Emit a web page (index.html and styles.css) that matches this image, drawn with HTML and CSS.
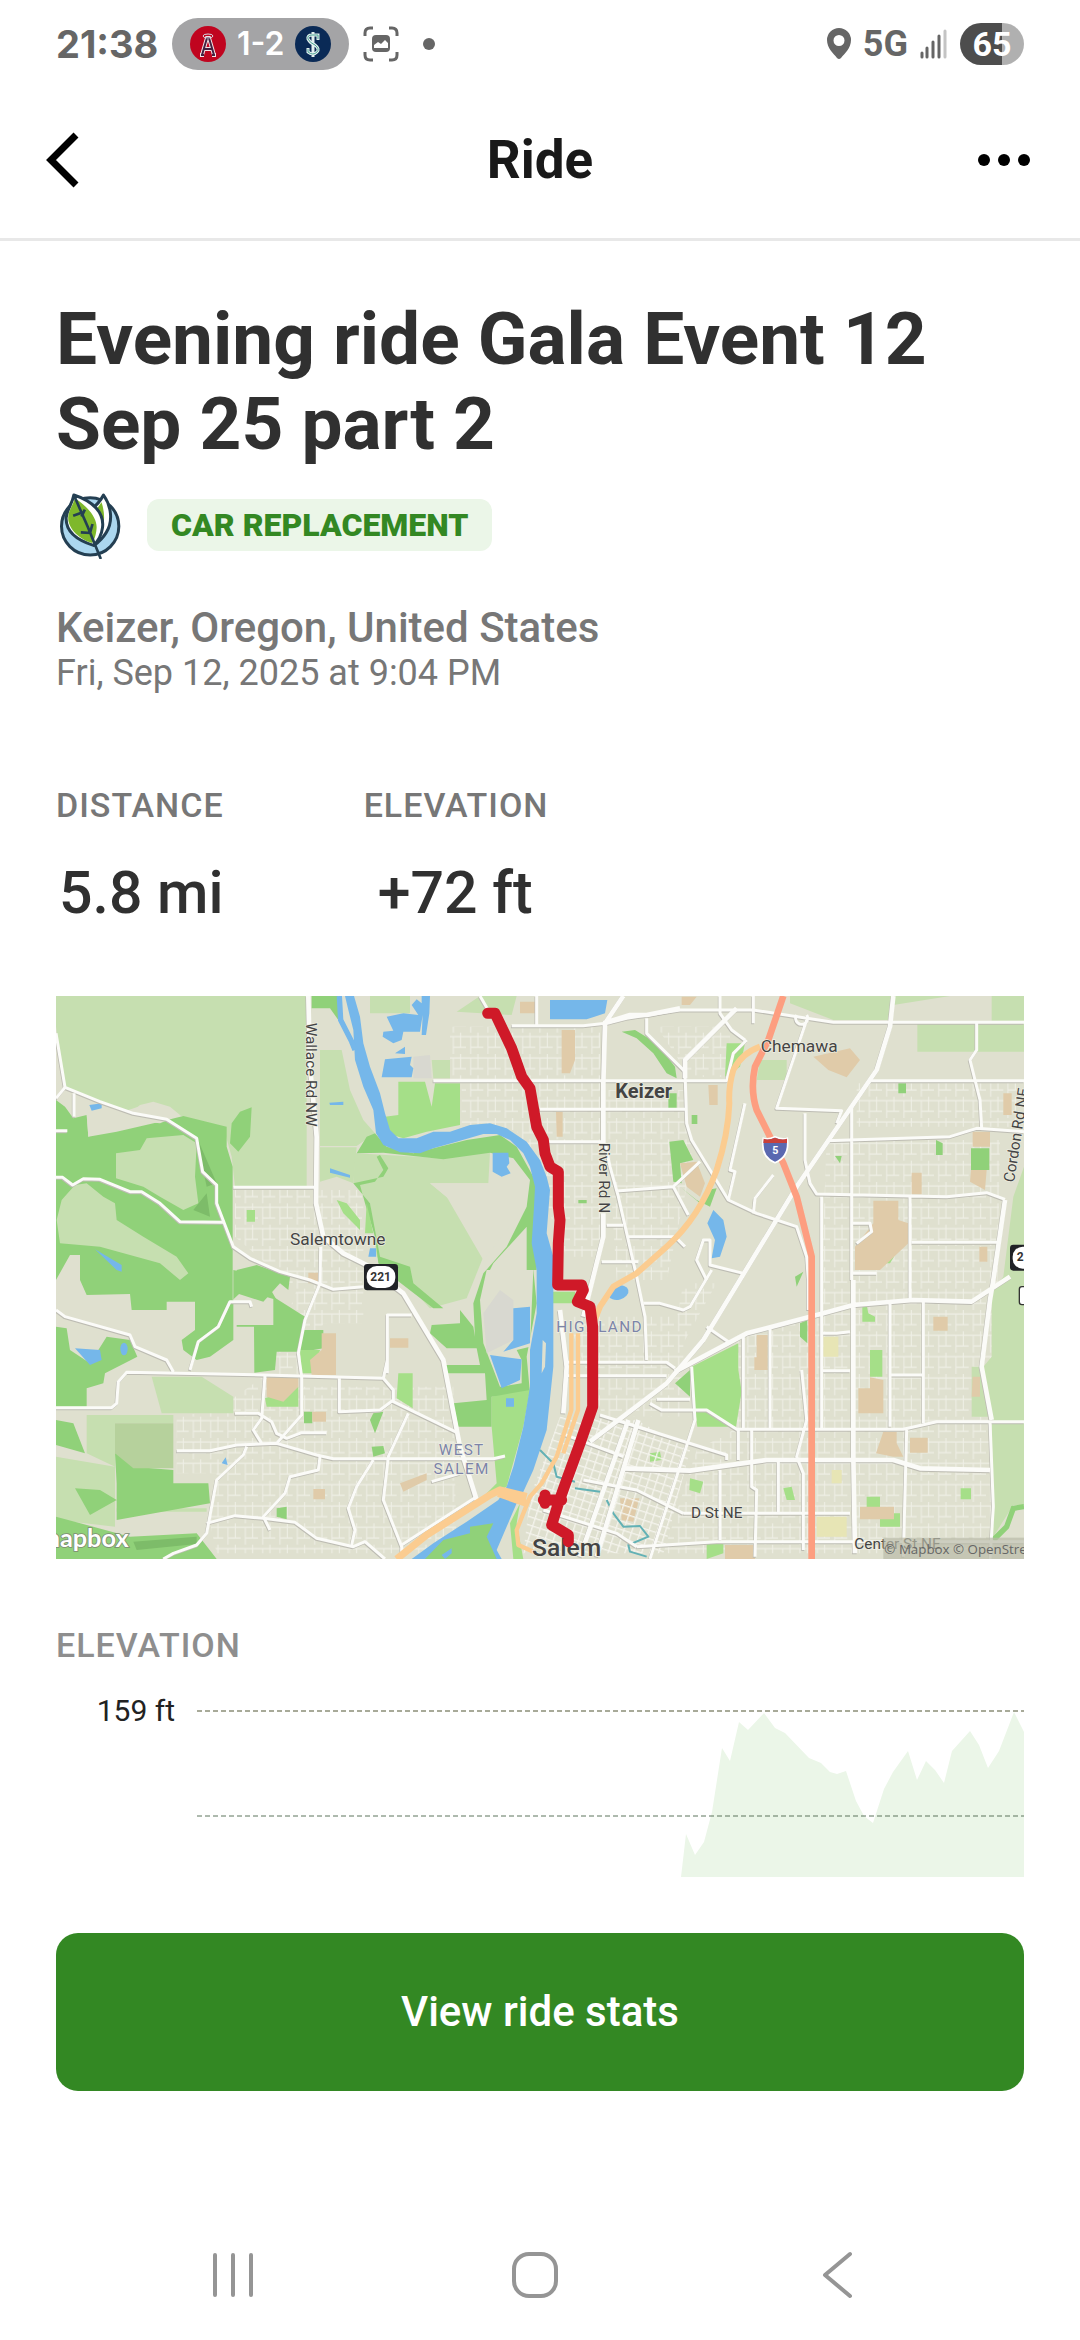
FILE: index.html
```html
<!DOCTYPE html>
<html lang="en">
<head>
<meta charset="utf-8">
<meta name="viewport" content="width=device-width, initial-scale=1">
<title>Ride</title>
<link rel="stylesheet" href="styles.css">
</head>
<body>
<div class="status">
  <div class="status-side">
    <span class="clock">21:38</span>
    <div class="score">
      <svg width="36" height="36" viewBox="0 0 36 36" aria-hidden="true"><circle cx="18" cy="18" r="18" fill="#c0041f"/><path d="M12 29L17 12H19L24 29M14 23H22M10 29H14M22 29H26" fill="none" stroke="#f2e4e6" stroke-width="4"/><path d="M12 29L17 12H19L24 29M14 23H22M11 29H14M22 29H25" fill="none" stroke="#432242" stroke-width="2"/><ellipse cx="18" cy="10" rx="5" ry="2" fill="none" stroke="#d5dbe4" stroke-width="1"/></svg>
      <span>1-2</span>
      <svg width="36" height="36" viewBox="0 0 36 36" aria-hidden="true"><circle cx="18" cy="18" r="18" fill="#0a2a56"/><path d="M23 14V9H17Q12 9 13 13Q15 17 20 19Q25 23 22 26Q18 30 13 26V22M18 6V31" fill="none" stroke="#e4f0f0" stroke-width="3"/><path d="M23 13V9H17Q12 9 13 13Q15 17 20 19Q25 23 22 26Q18 30 13 26V23" fill="none" stroke="#4ba394" stroke-width="1"/></svg>
    </div>
    <svg width="36" height="36" viewBox="0 0 36 36" aria-hidden="true"><path d="M2 10V7Q2 2 7 2H10M26 2H29Q34 2 34 7V10M34 26V29Q34 34 29 34H26M10 34H7Q2 34 2 29V26" fill="none" stroke="#666" stroke-width="3"/><rect x="9" y="9" width="18" height="17" rx="4" fill="#666"/><path d="M11 22V19L15 16L18 18L22 14L25 17V22Z" fill="#fff"/></svg>
    <svg class="dot" width="12" height="12" aria-hidden="true"><circle cx="6" cy="6" r="6" fill="#666"/></svg>
  </div>
  <div class="status-side status-right">
    <svg width="24" height="32" viewBox="0 0 24 32" aria-hidden="true"><path fill="#666" fill-rule="evenodd" d="M12 0A12 12 0 0 0 0 12C0 20 6 25 10 30Q12 32 14 30C18 25 24 20 24 12A12 12 0 0 0 12 0ZM12 7a5 5 0 1 1 0 11a5 5 0 1 1 0-11Z"/></svg>
    <span class="network">5G</span>
    <svg class="signal" width="28" height="30" viewBox="0 0 28 30" aria-hidden="true"><path d="M2 28V24M7 28V19M13 28V13M19 28V7" stroke="#666" stroke-width="3" stroke-linecap="round"/><path d="M25 28V2" stroke="#c4c4c4" stroke-width="3" stroke-linecap="round"/></svg>
    <span class="battery">65</span>
  </div>
</div>

<header class="bar">
  <button class="icon-button" aria-label="Back"><svg width="34" height="56" viewBox="3 0 34 56"><path d="M33 3L8 28L33 53" fill="none" stroke="#000" stroke-width="7" transform="translate(-2 0)"/></svg></button>
  <h1 class="bar-title">Ride</h1>
  <button class="icon-button" aria-label="More options"><svg width="54" height="12" viewBox="1 0 54 12"><circle cx="7" cy="6" r="6"/><circle cx="27" cy="6" r="6"/><circle cx="47" cy="6" r="6"/></svg></button>
</header>

<main class="ride">
  <h2 class="title">Evening ride Gala Event 12 Sep 25 part 2</h2>
  <div class="tags">
    <svg width="67" height="68" viewBox="0 0 200 204" aria-hidden="true">
      <g stroke="#243f52" stroke-width="9" stroke-linejoin="round">
        <circle cx="102" cy="106" r="86" fill="#abd7ef"/>
        <path d="M142 12C165 45 172 90 150 125C138 145 125 155 114 163L95 60Q125 45 142 12Z" fill="#fff"/>
        <path d="M136 34C150 75 145 115 122 145L115 60Q128 48 136 34Z" fill="#7eb82b" stroke="none"/>
        <path d="M53 12C110 30 145 65 139 110C136 135 126 150 112 163C70 150 28 125 30 80C32 55 48 40 53 12Z" fill="#fff"/>
        <path d="M56 22C100 50 125 85 121 115C119 135 114 147 108 156C72 145 36 115 36 80C38 55 50 45 56 22Z" fill="#7eb82b" stroke="none"/>
        <path d="M53 12L95 108L134 204M76 65L51 74M76 77L86 56M104 126L74 124M101 128L109 99" fill="none" stroke-width="8"/>
      </g>
    </svg>
    <span class="badge">CAR REPLACEMENT</span>
  </div>
  <p class="place">Keizer, Oregon, United States</p>
  <p class="date">Fri, Sep 12, 2025 at 9:04 PM</p>

  <dl class="stats">
    <div class="stat"><dt class="label">DISTANCE</dt><dd>5.8 mi</dd></div>
    <div class="stat stat-elevation"><dt class="label">ELEVATION</dt><dd>+72 ft</dd></div>
  </dl>

  <svg class="map" viewBox="18 18 2904 1689" role="img" aria-label="Map of the route from Keizer to Salem">
    <defs>
      <pattern id="streets" width="52" height="64" patternUnits="userSpaceOnUse"><path d="M0 12H52M14 12V64M36 0V44M14 44H52" fill="none" stroke="#efefe6" stroke-width="3"/></pattern>
      <pattern id="blocks" width="24" height="24" patternUnits="userSpaceOnUse" patternTransform="rotate(18)"><path d="M0 2H24M2 0V24" fill="none" stroke="#f4f3ec" stroke-width="4"/></pattern>
      <g id="roads">
        <g stroke-width="9">
          <path d="M18 130L45 292L150 335L250 370L350 388L440 445L458 545L500 585L500 640L550 770L600 805L690 845L780 870L850 898L940 890"/>
          <path d="M18 325L45 292M72 310V380M18 422H52M18 562L38 562L68 585L100 566L150 568L240 605L275 605L330 640L390 695L525 697M550 592H795"/>
          <path d="M812 770L810 880L765 990L745 1090L755 1160V1275L680 1360L560 1365L480 1382H380M680 1360L800 1395L850 1406H1330L1365 1398"/>
          <path d="M18 1253H185L200 1240L205 1175L230 1147L640 1155L1000 1165L1030 1200V1235L1220 1327M18 960L45 980L240 1035L255 1070L350 1110L370 1145"/>
          <path d="M420 1140L445 1055L505 1010L540 935H600L605 950M645 1155L635 1285L610 1320L635 1360M555 1270H625L665 1295L680 1330L710 1345L755 1328H830"/>
          <path d="M590 1370L580 1395L500 1470L470 1630L440 1665L370 1690L340 1707M470 1600L555 1577L640 1585L735 1597L800 1645L910 1670L945 1655L1005 1707"/>
          <path d="M810 1400L805 1440L720 1460L705 1510L640 1580L660 1620M970 1410L920 1490L895 1555L915 1620L905 1665M1075 1270L1015 1400L1000 1530L1055 1670M1012 1150V975H1085M1000 1165L1012 1110M868 1165V1265L990 1260L1030 1230M1055 1690V1665L1275 1523M1145 1475L1230 1450"/>
          <path d="M1150 272H2030L2050 190L2090 150M1385 107H1600L1680 98L1730 85L1890 60L2110 60L2350 97L2922 97M1460 18V105M1290 18L1320 70"/>
          <path d="M1470 358H1910M1470 455H1665M1700 603L1870 590L1950 515M1870 590L1915 675M1670 706H1720M1655 815H1765M1735 740H1875L1905 770"/>
          <path d="M1665 460L1680 530L1705 620L1760 860L1785 980L1790 1110M1790 85V130L1905 245L1910 400L1925 450L2035 630L2120 670L2240 710L2270 800L2275 870V960"/>
          <path d="M2270 75A18 18 0 1 1 2240 75M2270 90L2180 355L2375 362L2360 400M2265 370V510L2280 580L2300 612L2580 618L2690 620L2810 608L2865 628M2330 452L2700 440L2780 415L2922 425M2780 97V180L2760 210L2790 330L2795 415M2405 345V870M2460 272H2922M2315 620V1320M2580 620V930M2585 757H2845M2405 700H2460L2465 725L2420 760M2405 850H2480"/>
          <path d="M2085 340L2040 540L2055 545L2035 630M2170 555L2115 625L2110 670M2010 18L2010 70L2045 120L2085 150M2110 18V100M1970 870L1940 810L1960 750L1980 750V825L2080 850"/>
          <path d="M2520 935V1310M2620 935V1300M2315 1142H2400M2520 1155H2620M2160 1010V1315M2080 1040V1315M2315 1030L2360 1030L2400 1025M1780 940H1830L1900 960L1920 950L1985 840M1970 1010L2035 1055"/>
          <path d="M1545 1117H1850L1875 1135M1545 1157H1850M1800 1240L1835 1260H1970L2060 1318H2560L2660 1295H2922M1820 1228H1920M1925 1130L1935 1290L1800 1707M1650 1275L2030 1395V1410M2065 1320V1410M2105 1315V1490L2120 1500L2115 1700M2010 1440V1650M2185 1410V1570M2255 1140L2270 1290L2240 1400L2260 1450V1680"/>
          <path d="M1900 1570H2400M1760 1670L2000 1655H2922M2570 1320L2560 1700M2820 1295L2830 1550L2820 1707M1535 1330L1720 1400M1600 1470L1760 1500L1900 1570M1480 1560L1700 1630L1760 1670"/>
        </g>
        <g stroke-width="14">
          <path d="M775 18L780 230L800 440L798 640L820 740L880 790L950 825L1060 910L1180 1110L1230 1370L1280 1530"/>
          <path d="M1720 18L1665 100L1660 280V460M1660 670V740L1630 860L1600 980M1660 100L1740 75L1790 75L1890 55M2060 55L1905 210V265M2530 18L2520 110L2480 240L2240 590L1960 1050L1850 1180L1620 1355"/>
          <path d="M1875 1145L2090 1030L2320 970L2410 945L2590 930L2765 935L2880 860M2410 870V1400L2415 1690M1720 1435L1920 1442L2150 1410H2530L2610 1435L2820 1440M2865 630L2830 870L2820 930L2795 1130L2825 1290"/>
          <path d="M1735 1290L1590 1700M1765 1290L1640 1700M1530 960L1550 1130L1540 1270"/>
        </g>
      </g>
    </defs>

    <rect x="18" y="18" width="2904" height="1689" fill="#dfe0cf"/>

    <!-- street texture in built-up areas -->
    <g fill="url(#streets)">
      <path d="M555 600H940V1000H820L750 1190H1210L1220 1690H500L480 1600L500 1450H380V1280L500 1260L640 1160L700 1010L740 900L555 740Z"/>
      <path d="M1200 110H1650V800H1550L1400 420H1235V270H1200Z"/>
      <path d="M1665 300H1900L1930 500L1850 870H1700ZM1820 110H2040V260H1920ZM2330 450H2850L2830 1690H1840L1940 1380L2050 1320V1040L2310 980Z"/>
      <path d="M2420 280H2900V410H2420ZM1550 980H1900V1280H1660ZM1900 880H2000L1850 1150Z"/>
    </g>

    <!-- open fields -->
    <g fill="#c6dfb0">
      <path d="M18 18H770V590H555L545 500L520 410L400 380L330 350L280 345L220 365L150 340L75 310L45 290L18 110Z"/>
      <path d="M810 180H875L900 300L940 390L975 430L920 468H810ZM810 472H920L910 580L860 560L810 575ZM960 18H1080V70H960ZM1220 65L1290 18H1400L1385 75ZM1145 210H1200V265H1150Z"/>
      <path d="M915 490L1180 505L1320 485L1315 580L1140 580L1200 630L1300 800L1250 925L1140 955L1060 870L980 800L960 640L910 580Z"/>
      <path d="M110 1275H370V1300H195V1430L110 1390ZM305 1160H455L550 1220V1270H335ZM18 1400L195 1430V1610L18 1590ZM200 1555H470V1565H200Z"/>
      <path d="M2220 18H2700L2530 45L2520 90H2350L2220 40ZM2825 18H2922V92H2825ZM2602 100H2922V185H2602ZM2922 530L2890 620L2860 860L2825 900V1100L2800 1130L2825 1290L2830 1640L2890 1545H2922ZM2130 210H2210V270H2120ZM2765 1130H2795L2820 1280H2765Z"/>
    </g>

    <!-- woodland -->
    <g fill="#90d179">
      <path d="M18 330L45 350L70 385L110 375L115 440L200 425L330 395L400 378L530 410L530 470L548 530V930L580 900L680 930L640 860L550 840V1050L480 1100L440 1110L400 1080L395 1050L435 1020V935H350V960H245L240 912L110 915L90 870V795H60L18 870Z"/>
      <path d="M540 460L545 400L570 365L605 352L600 440L565 485ZM785 18H865V90L840 55H785ZM1110 360L1168 368V415L1135 405Z"/>
      <path d="M560 840L620 825L720 860L715 900L690 880L640 935L560 910ZM670 920L765 980L760 1020H820V1075L760 1085H680L675 1140L613 1148L612 1010H560V1005H670Z"/>
      <path d="M18 1010L50 1015L60 1080L120 1120L170 1040L240 1050L262 1100L165 1150L160 1180L110 1195V1250H18ZM195 1390H250V1430L370 1440V1480H475L480 1540L200 1590V1480ZM75 1495L150 1500L200 1530L120 1575ZM18 1580L240 1640L440 1630L500 1707H18ZM18 1290L70 1300L105 1390L18 1365Z"/>
      <path d="M920 490L950 440L975 430L1010 470L1090 490L1250 450L1350 435L1400 470L1450 560L1460 600V840H1450L1460 940L1430 1100L1440 1210L1400 1240L1350 1220H1325V1310H1225L1210 1240L1310 1230L1305 1150H1190L1185 1125H1290L1280 1075H1190L1140 1030L1145 1005L1230 1000L1230 960L1270 1010L1275 1040L1270 940L1300 850L1370 770L1430 650L1440 570L1390 505L1320 488L1180 508L1000 488Z"/>
      <path d="M910 580L1000 560L1015 535L990 495L980 500L1000 540L975 575L930 585L945 640L975 740L985 820L1040 870L1150 955H1180L1090 880L1080 830L990 800L960 640ZM970 1270L1000 1265L975 1330L960 1290ZM965 1370L1000 1368L1005 1390L970 1400ZM680 1555L710 1550V1588L680 1580ZM762 1265H787V1300H762Z"/>
      <path d="M1715 125L1755 120L1820 160L1875 230L1880 265L1850 250L1810 190L1760 145ZM1855 310H1880V355H1855ZM1858 455L1900 450L1930 510L1890 520L1895 580L1870 575ZM1890 590L1950 640L1970 600L2000 595L1980 650L1940 630ZM1875 1180L1920 1140V1220ZM2545 280H2568V310H2545ZM2658 450L2678 460V495H2658ZM2250 1000L2272 990V1060L2250 1040ZM2763 475H2818V540H2763ZM1925 375H1942V402H1925ZM2355 498H2375L2370 520ZM1585 630H1610V640H1585ZM2235 860L2260 845L2240 890Z"/>
    </g>

    <!-- clearings -->
    <g fill="#c6dfb0">
      <path d="M198 490L270 480L290 445L400 435L440 460L435 560L445 640L400 660L330 620L280 590L198 565Z"/>
      <path d="M20 690L35 630L75 585L110 580L160 620L195 640L200 690L280 740L380 800L415 850L390 870L330 820L150 770L30 760Z"/>
    </g>
    <g fill="#dfe0cf">
      <path d="M1190 620L1140 580H1320L1335 500L1390 520L1435 570L1425 650L1300 810ZM1430 710V840L1310 860L1330 820ZM270 345L310 335L360 350L390 375L330 400L220 390L115 440L110 370L150 340L240 370ZM1310 840H1450L1440 1070L1400 1080L1415 1110V1180L1350 1190L1300 1060L1290 930Z"/>
    </g>
    <path fill="#d8d8d0" d="M1300 970L1350 900L1390 930V1050L1310 1090ZM1090 200L1140 195L1145 265H1090Z"/>
    <path fill="#b6d19c" d="M195 1300H370V1435H250L195 1390Z"/>
    <path fill="#7dbc69" d="M250 1655L440 1640V1662L260 1680ZM440 440L500 580L470 590L455 520ZM430 660L470 610L480 680Z"/>

    <!-- parks -->
    <g fill="#a5df88">
      <path d="M1045 275H1125L1145 350L1155 280H1230V405L1130 425L1060 445L1010 430L1005 380L1045 375ZM1325 1220L1440 1200L1420 1310L1370 1490L1290 1530L1340 1480L1325 1310ZM1410 1540L1380 1600L1390 1707H1420L1400 1600Z"/>
      <path d="M2030 160H2085L2070 230L2025 260ZM1925 1130L2065 1060V1140L2075 1205L2058 1310H1942L1930 1220ZM2490 1610H2550V1570H2450V1520H2490ZM2490 770H2550L2520 820H2490ZM2460 1080H2497V1160H2460ZM2437 950L2450 945L2455 970L2475 980V995H2437ZM1970 1655H2020V1690L1970 1707ZM1800 1390L1830 1385L1835 1410L1800 1415ZM1920 1465L1960 1475L1950 1510L1918 1500ZM2200 1495L2225 1490L2235 1530L2210 1530ZM2732 1495H2763V1528H2732ZM1505 905H1575V940H1505Z"/>
      <path d="M1045 1150H1088V1255L1040 1225ZM645 1225L745 1190V1250H650ZM750 1080H810L790 1150H755ZM860 630L890 640L930 690V720L880 670ZM590 660H615V695H590ZM950 640L970 730H945Z"/>
    </g>

    <!-- school grounds -->
    <g fill="#e0cba9">
      <path d="M815 1030H858V1155H785L780 1110L815 1080ZM650 1160H745V1190L700 1235L650 1220ZM787 1265H828V1295H787ZM1020 1045H1075V1073H1020ZM1050 1480L1130 1450V1470L1060 1505ZM790 1497H825V1528H790ZM775 848H805V880H775ZM1410 35H1455V70H1410Z"/>
      <path d="M1535 120H1575V210L1560 250H1535ZM1895 20H1940L1920 45H1895ZM2290 200L2400 175L2430 210L2390 262L2335 240ZM1975 285H2003V345H1978ZM1890 520L1940 515L1965 580L1950 620L1910 590ZM1518 365H1538V440H1520ZM2470 632H2545V690L2575 700V760L2490 840H2415V770L2470 700ZM2768 425H2820V470H2768ZM2763 540H2810L2805 600L2760 575ZM2585 548H2615V613H2585ZM2860 310H2885V375H2860ZM2788 770H2812V815H2788Z"/>
      <path d="M2120 1035H2153V1140H2113V1102H2120ZM2460 1162L2500 1170V1270H2425V1195H2460ZM2580 1343H2633V1388H2580ZM2500 1325H2540V1360L2560 1400H2530L2478 1390ZM2430 1550H2532V1588H2430ZM2650 980H2693V1022H2650ZM1710 1525H1768L1750 1595L1715 1590ZM2025 1665H2115V1707H2025ZM2768 1160H2790V1220H2765Z"/>
    </g>
    <path fill="#e7e5b5" d="M2300 1580H2390V1640H2300ZM2320 1040H2365V1100H2320ZM2345 1440H2375V1480H2345Z"/>

    <!-- water -->
    <g fill="#75b7ea">
      <path d="M885 18L895 60L910 120L915 210L940 290L970 360L978 430L1000 465L1050 487L1110 490L1150 475L1220 455L1300 432L1340 432L1380 450L1420 490L1440 530L1455 590L1452 650L1445 760L1460 840V970L1440 1080V1190L1420 1310L1390 1430L1370 1490L1345 1530L1250 1595L1150 1660L1085 1707H1355L1340 1680L1400 1540L1420 1505L1450 1440L1490 1320L1510 1130L1510 870V800L1490 730L1500 600L1490 560L1470 510L1430 455L1370 415L1320 400L1260 405L1200 425H1150L1100 445H1045L1020 420L1005 370L990 310L960 230L940 160L930 80L912 18Z"/>
      <path d="M1010 80L1060 70L1105 75L1085 45L1100 28L1115 40V18H1140L1138 70L1128 135H1115L1118 75L1110 125L1060 125L1055 150L1030 160L998 140L1000 125L1030 122ZM1035 190L1065 170V192ZM1005 208L1085 200L1080 225L1090 235L1085 262H995ZM1328 488H1375L1378 520L1370 530L1382 550L1355 560L1328 545ZM118 345L155 340V355L125 362ZM838 338L880 335V345H840ZM840 535L900 555V563L840 548ZM135 778L215 825V845L200 840ZM960 775H978V800H955Z"/>
      <path d="M1390 955L1440 950V1060L1360 1085L1390 1050ZM1320 1095L1415 1108L1410 1170L1355 1195ZM75 1075L150 1080L155 1110L120 1125ZM515 1420L527 1402L533 1425ZM1368 1225H1392V1250H1368ZM1500 30H1672L1665 70L1610 88H1500ZM1990 660L2020 690L2030 740L2010 800L1985 805L1995 750L1972 700Z"/>
      <ellipse cx="222" cy="1077" rx="11" ry="19"/>
      <ellipse cx="1705" cy="908" rx="31" ry="21" transform="rotate(-15 1705 908)"/>
    </g>
    <path d="M868 18L872 90L905 155L915 180" fill="none" stroke="#75b7ea" stroke-width="16"/>
    <path fill="#dfe0cf" d="M1478 1050L1488 1060L1485 1130L1475 1150Z"/>
    <path fill="#90d179" d="M1125 1707L1180 1650L1260 1630V1610L1330 1600L1310 1640L1340 1707Z"/>
    <path fill="#75b7ea" d="M1175 1695L1205 1675V1690L1185 1707Z"/>
    <path d="M2922 1550L2890 1555L2870 1610L2830 1650" fill="none" stroke="#90d179" stroke-width="16"/>

    <path fill="url(#blocks)" d="M1530 1280L1760 1290L1920 1380L1840 1690H1420L1440 1520Z"/>
    <path fill="none" stroke="#62b1b5" stroke-width="6" stroke-linejoin="round" d="M1670 1530L1690 1570L1720 1610L1770 1608L1795 1640L1735 1665L1740 1685L1790 1700M1575 1495L1650 1505M1470 1380L1510 1420L1520 1460L1575 1475"/>

    <use href="#roads" fill="none" stroke="#bdbcb3" stroke-linejoin="round" transform="translate(-2 3)"/>
    <use href="#roads" fill="none" stroke="#fbfbf8" stroke-linejoin="round"/>

    <g fill="none" stroke="#fbcc90" stroke-width="18" stroke-linejoin="round">
      <path d="M2130 170Q2075 190 2050 240Q2035 290 2038 340Q2035 430 2000 540Q1950 680 1850 770L1760 850L1690 890L1650 950L1630 1000"/>
      <path d="M1040 1707L1130 1635L1320 1515L1350 1500L1430 1520M1345 1510L1430 1540" stroke-width="22"/>
      <path d="M1564 1030V1260L1520 1400L1475 1480L1440 1520L1400 1620L1405 1665L1460 1690M1584 1030V1260L1540 1390" stroke-width="13"/>
    </g>
    <path fill="none" stroke="#fd9e80" stroke-linejoin="round" stroke-width="20" d="M2200 18L2155 150L2115 230Q2100 300 2120 360L2160 440L2200 520L2240 620L2285 800V1707"/>

    <g class="names district" font-size="46">
      <text x="1519" y="1027">HIGHLAND</text>
      <text x="1235" y="1396" text-anchor="middle">WEST</text>
      <text x="1235" y="1452" text-anchor="middle">SALEM</text>
    </g>
    <text class="names" x="1446" y="1697" font-size="74" font-weight="500">Salem</text>

    <!-- ridden route -->
    <path d="M1313 70H1335L1385 175L1415 260L1440 295L1460 410L1480 450L1485 490L1500 530L1525 545V650L1530 690L1525 760L1523 885H1595L1600 900L1582 935L1620 950L1628 1010V1250L1590 1360L1550 1470L1525 1540L1505 1605L1555 1635V1655M1535 1530H1480M1485 1515V1540" fill="none" stroke="#cf1928" stroke-width="33" stroke-linejoin="round" stroke-linecap="round"/>

    <!-- highway shields -->
    <rect x="942" y="822" width="102" height="79" rx="10" fill="#202226"/><rect x="950" y="828" width="86" height="66" rx="30" fill="#fff"/>
    <text x="992" y="872" font-size="36" font-weight="700" text-anchor="middle" fill="#333">221</text>
    <path d="M2140 445Q2155 450 2175 440Q2195 450 2212 445Q2220 500 2175 518Q2130 500 2140 445Z" fill="#5a68b0" stroke="#fff" stroke-width="5"/><path d="M2141 446Q2155 452 2175 443Q2195 452 2211 446V459H2140Z" fill="#c9413b"/>
    <text x="2176" y="493" font-size="32" font-weight="700" text-anchor="middle" fill="#fff">5</text>
    <rect x="2880" y="764" width="102" height="78" rx="10" fill="#202226"/><rect x="2888" y="770" width="86" height="66" rx="30" fill="#fff"/>
    <text x="2900" y="814" font-size="36" font-weight="700" fill="#333">2</text>
    <rect x="2908" y="890" width="60" height="54" rx="8" fill="#fff" stroke="#333" stroke-width="4"/>

    <!-- place names -->
    <g class="names">
      <text transform="translate(768 98) rotate(90)" font-size="46">Wallace Rd NW</text>
      <text transform="translate(1648 458) rotate(90)" font-size="46">River Rd N</text>
      <text transform="translate(2892 578) rotate(-81)" font-size="46">Cordon Rd NE</text>
      <text x="720" y="764" font-size="52">Salemtowne</text>
      <text x="2132" y="186" font-size="52">Chemawa</text>
      <text x="1696" y="325" font-size="60" font-weight="700">Keizer</text>
      <text x="1923" y="1585" font-size="46">D St NE</text>
      <text x="2413" y="1676" font-size="46">Center St NE</text>
    </g>
    <text x="-34" y="1672" font-size="76" font-weight="700" class="brand">mapbox</text>
    <rect x="2500" y="1643" width="422" height="64" fill="#b9bba8" opacity=".7"/>
    <text x="2503" y="1692" font-size="40" class="credit">© Mapbox © OpenStreetMap</text>
  </svg>

  <section class="profile">
    <h3 class="label label-soft">ELEVATION</h3>
    <div class="chart">
      <span class="axis">159 ft</span>
      <svg class="plot" viewBox="0 0 827 168" role="img" aria-label="Elevation profile">
        <path fill="#ebf6e8" d="M484 168L489 125L498 146L507 133L515 103L525 39L533 52L542 13L551 21L567 4L578 19L588 24L612 49L624 54L633 63L640 65L649 62L659 92L667 107L676 114L687 80L696 63L711 42L720 71L729 52L738 61L747 74L755 42L773 22L782 36L791 59L802 42L817 3L827 23V168Z"/>
        <path d="M0 2H827" stroke="#a8aa99" stroke-width="2" stroke-dasharray="5 3"/>
        <path d="M0 107H827" stroke="#5d755d" stroke-width="1" stroke-dasharray="5 3"/>
      </svg>
    </div>
  </section>

  <button class="primary">View ride stats</button>
</main>

<nav class="system" aria-label="System navigation">
  <button class="icon-button" aria-label="Recent apps"><svg width="42" height="46" viewBox="0 0 42 46"><path d="M3 3V43M21 3V43M39 3V43" stroke="#959595" stroke-width="4" stroke-linecap="round"/></svg></button>
  <button class="icon-button" aria-label="Home"><svg width="46" height="46" viewBox="0 0 46 46"><rect x="2" y="2" width="42" height="42" rx="15" fill="none" stroke="#959595" stroke-width="4"/></svg></button>
  <button class="icon-button" aria-label="System back"><svg width="42" height="46" viewBox="0 0 42 46"><path d="M34 2L9 23L34 44" fill="none" stroke="#959595" stroke-width="4" stroke-linecap="round" stroke-linejoin="round"/></svg></button>
</nav>
</body>
</html>
```
FILE: styles.css
```css
* { box-sizing: border-box; }

body {
  margin: 0;
  min-height: 100vh;
  display: flex;
  flex-direction: column;
  background: #fff;
  color: #303030;
  font-family: Roboto, "Liberation Sans", sans-serif;
}

h1, h2, h3, p, dl, dd { margin: 0; }
svg { display: block; flex: none; }
button { font: inherit; cursor: pointer; }

.status {
  display: flex;
  justify-content: space-between;
  align-items: center;
  height: 88px;
  padding: 0 56px;
  color: #666;
}
.status-side { display: flex; align-items: center; gap: 14px; }
.status-right { gap: 12px; }
.clock {
  font: 700 38px/48px Inter, sans-serif;
}
.score {
  display: flex;
  align-items: center;
  justify-content: space-between;
  width: 177px;
  height: 52px;
  padding: 0 18px;
  border-radius: 26px;
  background: #a4a4a6;
  color: #fff;
  font: 600 32px/40px Inter, sans-serif;
}
.dot { margin-left: 10px; }
.network { font-size: 36px; line-height: 40px; font-weight: 700; }
.battery {
  width: 64px;
  border-radius: 21px;
  background: linear-gradient(to right, #4d4d4d 65%, #b0b0b0 65%);
  color: #fff;
  font-size: 34px;
  line-height: 42px;
  font-weight: 700;
  text-align: center;
}

.bar {
  display: grid;
  grid-template-columns: 1fr auto 1fr;
  align-items: center;
  height: 153px;
  padding: 0 48px;
  padding-bottom: 6px;
  border-bottom: 3px solid #e8e8e8;
}
.bar-title { font-size: 53px; line-height: 64px; font-weight: 700; color: #191919; }
.icon-button { display: flex; padding: 0; border: 0; background: none; }
.icon-button svg { overflow: visible; }
.bar .icon-button:last-child { justify-self: end; }

.ride { padding: 56px 56px 0; }
.title { font-size: 73px; line-height: 85px; font-weight: 700; }
.tags { display: flex; align-items: center; gap: 24px; margin-top: 24px; }
.badge {
  padding: 6px 24px;
  border-radius: 12px;
  background: #ebf6e8;
  color: #338823;
  font-size: 32px;
  line-height: 40px;
  font-weight: 900;
}
.place { margin-top: 46px; color: #777; font-size: 42px; line-height: 46px; font-weight: 500; }
.date { color: #777; font-size: 36px; line-height: 44px; }

.stats { display: flex; gap: 140px; margin-top: 90px; }
.label { color: #777; font-size: 34px; line-height: 40px; font-weight: 500; letter-spacing: 1px; }
.stat dd { margin-top: 32px; padding-left: 3px; font-size: 59px; line-height: 72px; font-weight: 500; }
.stat-elevation dd { padding-left: 14px; }

.map { width: 100%; height: auto; margin-top: 67px; font-family: Roboto, sans-serif; }
.names { fill: #444; stroke: #eeeee2; stroke-width: 4px; paint-order: stroke; }
.district { fill: #7c84a8; letter-spacing: 4px; }
.brand { fill: #fff; stroke: #7d8a72; stroke-width: 5px; paint-order: stroke; font-family: Lato, sans-serif; }
.credit { fill: #666; font-family: "Open Sans", sans-serif; }

.profile { margin-top: 66px; }
.label-soft { color: #8e8e8e; }
.chart { display: grid; grid-template-columns: 119px 1fr; column-gap: 22px; margin-top: 28px; }
.axis { color: #222; font-size: 30px; line-height: 36px; text-align: right; }
.plot { width: 100%; height: auto; padding-top: 16px; }

.primary {
  display: block;
  width: 100%;
  margin-top: 56px;
  padding: 51px 24px;
  border: 0;
  border-radius: 22px;
  background: #338823;
  color: #fff;
  font-size: 42px;
  line-height: 56px;
  font-weight: 500;
}

.system {
  display: grid;
  grid-template-columns: repeat(3, 1fr);
  justify-items: center;
  margin-top: auto;
  padding: 24px 92px 42px 82px;
}
```
